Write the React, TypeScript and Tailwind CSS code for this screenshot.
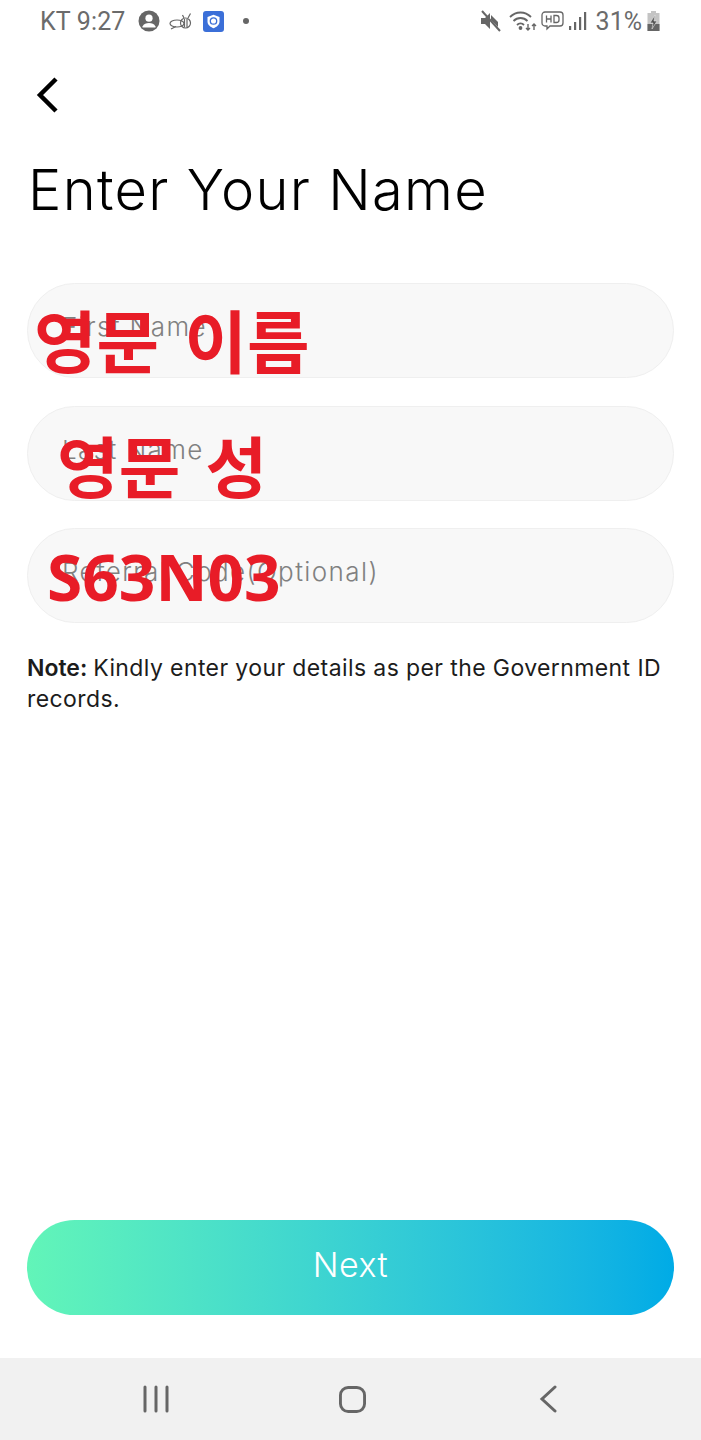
import React from 'react';

const sans = { fontFamily: 'Inter, "Noto Sans", sans-serif' };

function StatusBar() {
  return (
    <div className="flex items-center justify-between h-[42px] pl-[40px] pr-[40px] text-[#6b6b6b]">
      <div className="flex items-center">
        <span className="font-['Roboto',sans-serif] text-[25px] leading-none tracking-[0.15px]">KT 9:27</span>
        <svg className="ml-[12px]" width="22" height="22" viewBox="0 0 22 22">
          <circle cx="11" cy="11" r="10.5" fill="#666" />
          <circle cx="11" cy="8.2" r="3.6" fill="#fff" />
          <path d="M4.5 16.5c1.2-2.8 3.8-3.6 6.5-3.6s5.300.8 6.500 3.600v1h-13z" fill="#fff" />
        </svg>
        <svg className="ml-[9px]" width="24" height="22" viewBox="0 0 24 22" fill="none" stroke="#666" strokeWidth="1.2">
          <ellipse cx="8" cy="13.500" rx="7" ry="3.500" />
          <circle cx="16.500" cy="13" r="5" />
          <path d="M19 8l2.500-4.500M15 8l-1.500-3M2 19l5-2.500M15.500 9v8M18 9v8" />
        </svg>
        <div className="ml-[10px] w-[21px] h-[21px] rounded-[3px] bg-[#3b6fd8] flex items-center justify-center">
          <svg width="15" height="15" viewBox="0 0 15 15">
            <path d="M7.500.8L13.500 3v4.500c0 3.200-2.700 5.500-6 6.700-3.300-1.200-6-3.500-6-6.700V3z" fill="#fff" />
            <circle cx="7.500" cy="7" r="3.200" fill="none" stroke="#3b6fd8" strokeWidth="1.300" />
          </svg>
        </div>
        <div className="ml-[19px] w-[6px] h-[6px] rounded-full bg-[#666]" />
      </div>
      <div className="flex items-center">
        <svg width="22" height="22" viewBox="0 0 22 22" fill="#666">
          <path d="M1 8h4l5-5v16l-5-5H1z" />
          <path d="M11 5l7 7v5l-7-7z" />
          <path d="M2 1l18 20" stroke="#666" strokeWidth="2" />
        </svg>
        <svg className="ml-[7px]" width="28" height="24" viewBox="0 0 28 24" fill="none" stroke="#666" strokeWidth="1.800">
          <path d="M1 8c6-6 15-6 21 0M4.500 12c4-4 10-4 14 0M8 16c2-2 5-2 7 0" />
          <circle cx="11.500" cy="19" r="1" fill="#666" />
          <path d="M19 15v6M17 19l2 2 2-2M25 21v-6M23 17l2-2 2 2" strokeWidth="1.400" />
        </svg>
        <svg className="ml-[4px]" width="23" height="22" viewBox="0 0 23 22" fill="none" stroke="#666" strokeWidth="1.300">
          <path d="M4 2h15a3 3 0 013 3v8a3 3 0 01-3 3H9l-3 3v-3H4a3 3 0 01-3-3V5a3 3 0 013-3z" />
          <path d="M5.500 5.500v7M5.500 9h4.500M10 5.500v7M13 5.500v7h2.500a2.500 2.500 0 002.500-2.500V8a2.500 2.500 0 00-2.500-2.500z" />
        </svg>
        <svg className="ml-[4px]" width="19" height="20" viewBox="0 0 19 20" fill="#666">
          <rect x="1" y="15" width="2.200" height="4" />
          <rect x="6" y="11" width="2.200" height="8" />
          <rect x="11" y="6" width="2.200" height="13" />
          <rect x="16" y="1" width="2.200" height="18" />
        </svg>
        <span className="ml-[9px] font-['Roboto',sans-serif] text-[25px] leading-none">31%</span>
        <svg className="ml-[4px]" width="15" height="22" viewBox="1.500 0 12 22">
          <path d="M5 1h5v2h3.500v18h-12V3H5z" fill="#c4c4c4" />
          <path d="M1.500 14h12v7h-12z" fill="#666" />
          <path d="M9 5l-5 8h3l-1 6 5-8H8z" fill="#555" stroke="#e5e5e5" strokeWidth=".6" />
        </svg>
      </div>
    </div>
  );
}

function Field({ label, overlay, overlayClass }: { label: string; overlay: string; overlayClass: string }) {
  return (
    <div className="relative h-[95px] rounded-full bg-[#f8f8f8] border border-[#efefef] flex items-center pl-[34px] pb-[8px]">
      <span className="text-[26px] font-light tracking-[1.4px] text-[#808080] whitespace-nowrap">{label}</span>
      <span className={overlayClass}>{overlay}</span>
    </div>
  );
}

export default function App() {
  return (
    <div className="w-[701px] h-[1440px] bg-white flex flex-col overflow-hidden" style={sans}>
      <StatusBar />
      <div className="flex-1 flex flex-col px-[27px]">
        <svg className="mt-[34px] ml-[7px]" width="26" height="38" viewBox="0 0 26 38" fill="none" stroke="#000" strokeWidth="4.5">
          <path d="M22 3L6 19l16 16" />
        </svg>
        <h1 className="mt-[40px] ml-[1px] text-[56px] leading-[72px] font-light tracking-[1.3px] text-black whitespace-nowrap">Enter Your Name</h1>
        <div className="mt-[57px] flex flex-col gap-[27.5px]">
          <Field
            label="First Name"
            overlay="영문 이름"
            overlayClass="absolute left-[6px] top-[21px] text-[68px] leading-none font-bold text-[#e81c27] whitespace-nowrap [word-spacing:10px] font-['Noto_Sans_CJK_KR',sans-serif]"
          />
          <Field
            label="Last Name"
            overlay="영문 성"
            overlayClass="absolute left-[29px] top-[23px] text-[67px] leading-none font-bold text-[#e81c27] whitespace-nowrap [word-spacing:10px] font-['Noto_Sans_CJK_KR',sans-serif]"
          />
          <Field
            label="Referral Code(Optional)"
            overlay="S63N03"
            overlayClass="absolute left-[19px] top-[16px] text-[64px] leading-none font-bold text-[#e81c27] whitespace-nowrap font-['Open_Sans',sans-serif]"
          />
        </div>
        <p className="mt-[30px] text-[23px] leading-[31px] tracking-[0.4px] text-[#1c1c1c]">
          <span className="font-semibold tracking-normal mr-[-1px]">Note:</span> Kindly enter your details as per the Government ID records.
        </p>
        <div className="mt-auto mb-[43px] h-[95px] rounded-full bg-gradient-to-r from-[#62f5b8] to-[#00abe6] flex items-center justify-center pb-[6px] text-white text-[34px] tracking-[0.5px] font-light">
          Next
        </div>
      </div>
      <div className="h-[82px] bg-[#f1f1f1] flex items-center pl-[142px]">
        <svg width="28" height="28" viewBox="0 0 28 28" stroke="#666" strokeWidth="3" strokeLinecap="round">
          <path d="M3 2v24M14 2v24M25 2v24" />
        </svg>
        <svg className="ml-[169px]" width="27" height="27" viewBox="0 0 28 28" fill="none" stroke="#666" strokeWidth="3">
          <rect x="1.500" y="1.500" width="25" height="25" rx="8" />
        </svg>
        <svg className="ml-[173px]" width="18" height="28" viewBox="0 0 18 28" fill="none" stroke="#666" strokeWidth="3" strokeLinecap="round">
          <path d="M16 2L3 14l13 12" />
        </svg>
      </div>
    </div>
  );
}
